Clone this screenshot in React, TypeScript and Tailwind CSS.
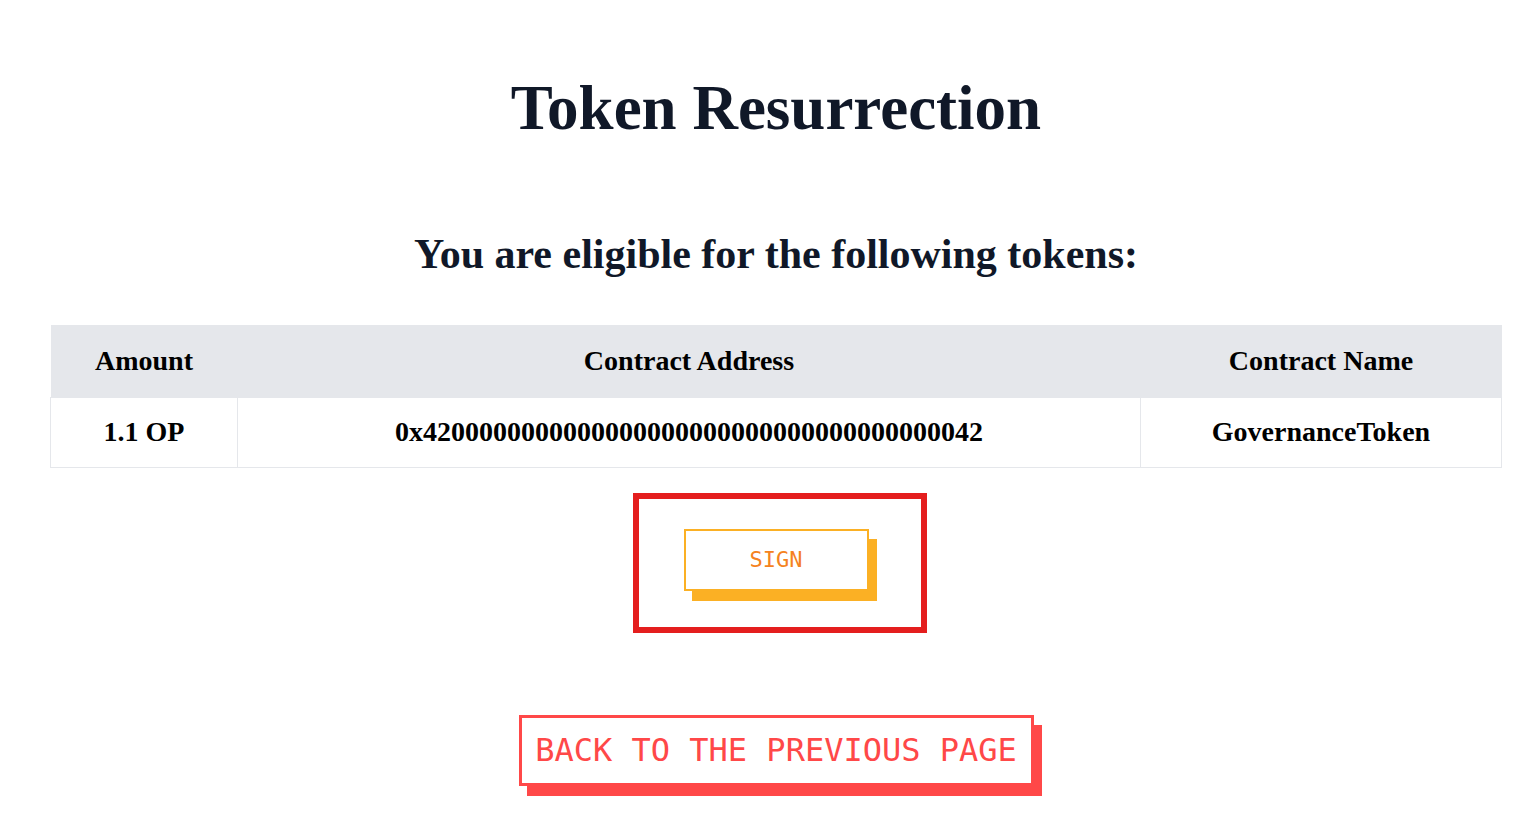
import React from 'react'

const rows = [
  {
    amount: '1.1 OP',
    address: '0x4200000000000000000000000000000000000042',
    name: 'GovernanceToken',
  },
]

export default function App() {
  return (
    <div className="min-h-screen bg-white pl-[50px] pr-[32px] pt-[72px] font-['Liberation_Serif',serif] text-black">
      <h1 className="text-center text-[63px] font-bold leading-[72px] text-gray-900">Token Resurrection</h1>

      <h2 className="mt-[86px] text-center text-[42px] font-bold leading-[48px] text-gray-900">
        You are eligible for the following tokens:
      </h2>

      <table className="mt-[47px] w-full border-collapse text-[28px] font-bold">
        <thead>
          <tr className="bg-gray-200">
            <th className="h-[72px] w-[187px] text-center">Amount</th>
            <th className="h-[72px] w-[903px] text-center">Contract Address</th>
            <th className="h-[72px] text-center">Contract Name</th>
          </tr>
        </thead>
        <tbody>
          {rows.map((r) => (
            <tr key={r.address}>
              <td className="h-[70px] border border-gray-200 text-center">{r.amount}</td>
              <td className="h-[70px] border border-gray-200 text-center">{r.address}</td>
              <td className="h-[70px] border border-gray-200 text-center">{r.name}</td>
            </tr>
          ))}
        </tbody>
      </table>

      <div className="mt-[25px] flex justify-center">
        <div className="ml-[8px] flex h-[140px] w-[294px] items-center justify-center border-[6px] border-[#e41e1e] pb-[6px] pr-[8px]">
          <button className="h-[62px] w-[185px] border-2 border-[#fbb024] bg-white font-['DejaVu_Sans_Mono',monospace] text-[22px] text-[#f58220] shadow-[8px_10px_0_0_#fbb024]">
            SIGN
          </button>
        </div>
      </div>

      <div className="mt-[82px] flex justify-center">
        <button className="h-[71px] w-[515px] border-[3px] border-[#ff4848] bg-white font-['DejaVu_Sans_Mono',monospace] text-[32px] text-[#ff4848] shadow-[8px_10px_0_0_#ff4848]">
          BACK TO THE PREVIOUS PAGE
        </button>
      </div>
    </div>
  )
}
